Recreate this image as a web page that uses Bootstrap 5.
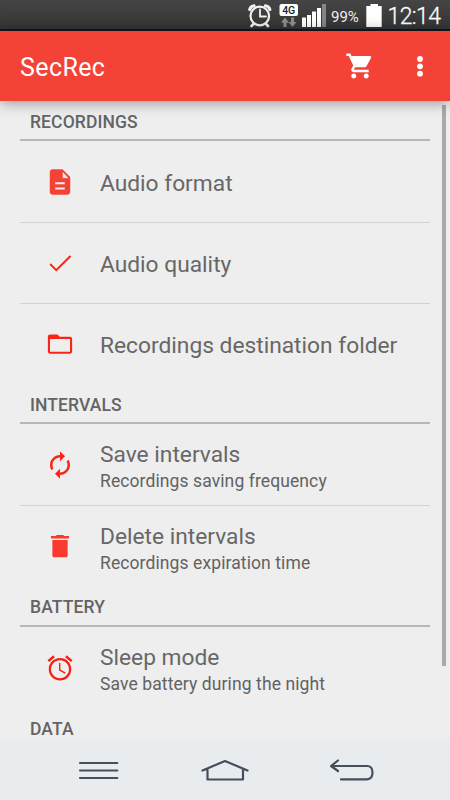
<!DOCTYPE html>
<html lang="en">
<head>
<meta charset="utf-8">
<meta name="viewport" content="width=device-width, initial-scale=1">
<title>SecRec</title>
<link href="https://cdn.jsdelivr.net/npm/bootstrap@5.3.0/dist/css/bootstrap.min.css" rel="stylesheet">
<style>
body{font-family:Roboto,"Liberation Sans",sans-serif;background:#eee;color:#676767;height:800px;line-height:1}
svg{display:block;flex:none}
.status-bar{height:31px;background:linear-gradient(#454545,#353535 94%,#101820 95%);color:#f0f0f0}
.net-label{font-size:15px}
.clock{font-size:23px;font-weight:300}
.app-bar{height:70px;background:#f44336;box-shadow:0 1px 14px rgba(0,0,0,.42);z-index:2}
.app-title{font-size:25px;font-weight:400;letter-spacing:.4px;margin-left:20px;padding-top:4px}
.settings{height:639px}
.settings-list{width:410px}
.section-title{height:40px;border-bottom:2px solid #b7b7b7;font-size:17.5px;font-weight:500;letter-spacing:.1px;padding:4px 0 0 10px;color:#646464}
.section-tall{height:41px}
.setting{height:81px}
.setting+.setting{border-top:1px solid #d2d2d2}
.setting-icon{width:80px;padding-left:25px}
.setting-name{font-size:22.75px;line-height:27px;padding-top:3px}
.setting-note{font-size:17.5px;line-height:21px;margin-top:3px;letter-spacing:.1px;color:#626262}
.setting-pair{padding-top:1px}
.scroll-thumb{right:4px;top:4px;width:4px;height:561px;background:#aaa}
.nav-keys{height:60px;background:#e8ecef;z-index:3}
</style>
<script src="https://cdn.jsdelivr.net/npm/bootstrap@5.3.0/dist/js/bootstrap.bundle.min.js"></script>
</head>
<body class="d-flex flex-column overflow-hidden">
<header class="status-bar d-flex flex-shrink-0 align-items-center justify-content-end">
  <svg width="202" height="31" viewBox="248 0 202 31" role="img" aria-label="Status">
    <g fill="none" stroke="#f2f2f2" stroke-linecap="round">
      <circle cx="259.800" cy="16" r="9.300" stroke-width="2.200"/>
      <path d="M260 9.500V16.500H266" stroke-width="1.800"/>
      <path d="M249.800 9.500Q250.300 6.500 254 5.800M265.500 5.800Q269.200 6.500 269.800 9.500" stroke-width="3.200"/>
      <path d="M253.500 24l-2 2M266 24l2 2" stroke-width="2.600"/>
    </g>
    <rect x="279.500" y="4" width="18.500" height="12" rx="2" fill="#fff"/>
    <text x="288.700" y="14" text-anchor="middle" font-size="10.500" font-weight="500" fill="#222">4G</text>
    <path d="M285 17.500l4 5h-2.500v4.500h-3v-4.500H281zM291 17.500h3v4.500h2.500l-4 5-4-5h2.500z" fill="#8e8e8e"/>
    <path d="M302 17.500h4V27h-4zM307 15h4v12h-4zM312 11.500h4V27h-4zM317 8h4v19h-4z" fill="#fff"/>
    <path d="M322 4h4v23h-4z" fill="#858585"/>
    <path d="M370.500 4h7.500v2h3.700v21h-15.400V6h4.200z" fill="#fff"/>
    <text class="net-label" x="331" y="22" fill="#eee">99%</text>
    <text class="clock" x="387.500" y="24" fill="#fff" stroke="#fff" stroke-width=".3" textLength="53.500">12:14</text>
  </svg>
</header>
<nav class="app-bar navbar flex-shrink-0 flex-nowrap text-white p-0 position-relative">
  <h1 class="app-title mb-0 me-auto">SecRec</h1>
  <svg width="30" height="30" viewBox="0 0 24 24" fill="#fff"><path d="M7 18c-1.100 0-1.990.9-1.990 2S5.900 22 7 22s2-.9 2-2-.9-2-2-2zM1 2v2h2l3.600 7.590-1.350 2.450c-.16.280-.25.610-.25.960 0 1.100.9 2 2 2h12v-2H7.420c-.14 0-.25-.11-.25-.25l.03-.12.900-1.630h7.450c.75 0 1.410-.41 1.750-1.030l3.580-6.490A1 1 0 0 0 20 4H5.210l-.94-2H1zm16 16c-1.100 0-1.990.9-1.990 2s.89 2 1.990 2 2-.9 2-2-.9-2-2-2z"/></svg>
  <svg width="75" height="30" viewBox="0 0 75 30" fill="#fff"><circle cx="45" cy="8" r="2.900"/><circle cx="45" cy="15.300" r="2.900"/><circle cx="45" cy="22.700" r="2.900"/></svg>
</nav>
<main class="settings position-relative overflow-hidden flex-shrink-0">
  <div class="settings-list mx-auto">
    <h2 class="section-title d-flex align-items-center mb-0">RECORDINGS</h2>
    <div class="setting d-flex align-items-center">
      <div class="setting-icon"><svg width="30" height="30" viewBox="0 0 24 24" fill="#f44336" stroke="#fb2a1c" stroke-width=".3"><path d="M14 2H6c-1.100 0-1.990.9-1.990 2L4 20c0 1.100.89 2 1.990 2H18c1.100 0 2-.9 2-2V8l-6-6zm2 16.200H8v-2h8v2zm0-4.200H8v-2h8v2zm-2-5V3.500L19 9z"/></svg></div>
      <div class="setting-name">Audio format</div>
    </div>
    <div class="setting d-flex align-items-center">
      <div class="setting-icon"><svg width="30" height="30" viewBox="0 0 24 24" fill="#fb2418"><path d="M9 16.500L4.700 12.200l-1.100 1.200L9 18.800 21 6.900l-1.200-1.200z"/></svg></div>
      <div class="setting-name">Audio quality</div>
    </div>
    <div class="setting d-flex align-items-center">
      <div class="setting-icon"><svg width="30" height="30" viewBox="0 0 24 24" fill="#fb2418"><path d="M20.200 6.200h-8.400L10 4.400H4.200C3 4.400 2.300 5.100 2.300 6v12c0 .9.700 1.700 1.700 1.700h16.100c.9 0 1.600-.8 1.600-1.700V7.900c0-.9-.7-1.700-1.500-1.700zM20 18.100H4V8h16z"/></svg></div>
      <div class="setting-name">Recordings destination folder</div>
    </div>
    <h2 class="section-title d-flex align-items-center mb-0">INTERVALS</h2>
    <div class="setting d-flex align-items-center">
      <div class="setting-icon"><svg width="30" height="30" viewBox="0 0 24 24" fill="#fb2418"><path d="M12 6v3l4-4-4-4v3c-4.420 0-8 3.580-8 8 0 1.570.46 3.030 1.240 4.260L6.700 14.800c-.45-.83-.7-1.790-.7-2.800 0-3.310 2.690-6 6-6zm6.760 1.740L17.300 9.200c.44.840.7 1.790.7 2.800 0 3.310-2.690 6-6 6v-3l-4 4 4 4v-3c4.420 0 8-3.580 8-8 0-1.570-.46-3.030-1.240-4.260z"/></svg></div>
      <div class="setting-pair"><div class="setting-name">Save intervals</div><div class="setting-note">Recordings saving frequency</div></div>
    </div>
    <div class="setting d-flex align-items-center">
      <div class="setting-icon"><svg width="30" height="30" viewBox="0 0 24 24" fill="#f93a2d"><path d="M5.900 7.200h12.200v12.500c0 .7-.5 1.200-1.200 1.200H7.100c-.7 0-1.200-.5-1.200-1.200zM19.200 4h-3.700l-1-.9h-5l-1 .9H4.800v1.900h14.400z"/></svg></div>
      <div class="setting-pair"><div class="setting-name">Delete intervals</div><div class="setting-note">Recordings expiration time</div></div>
    </div>
    <h2 class="section-title section-tall d-flex align-items-center mb-0">BATTERY</h2>
    <div class="setting d-flex align-items-center">
      <div class="setting-icon"><svg width="30" height="30" viewBox="0 0 24 24" fill="#fb1d12"><path d="M22 5.720l-4.600-3.860-1.290 1.530 4.600 3.860L22 5.720zM7.880 3.390L6.600 1.860 2 5.710l1.290 1.530 4.590-3.850zM12.300 8H11.200v6l4.750 2.650.55-1.030-4.200-2.370V8zM12 4c-4.970 0-9 4.030-9 9s4.020 9 9 9a9 9 0 0 0 0-18zm0 16.200c-3.980 0-7.200-3.220-7.200-7.200s3.220-7.200 7.200-7.200 7.200 3.220 7.200 7.200-3.220 7.200-7.200 7.200z"/></svg></div>
      <div class="setting-pair"><div class="setting-name">Sleep mode</div><div class="setting-note">Save battery during the night</div></div>
    </div>
    <h2 class="section-title section-tall d-flex align-items-center mb-0">DATA</h2>
  </div>
  <div class="scroll-thumb position-absolute"></div>
</main>
<footer class="nav-keys flex-shrink-0">
  <svg width="450" height="60" viewBox="0 740 450 60" fill="none" stroke="#454e5b" stroke-width="2.200" stroke-linecap="round" stroke-linejoin="round">
    <path d="M80 763h37.300M80 770.500h37.300M80 778h37.300"/>
    <path d="M202.500 770.500L225 761l22.500 9.500M207.500 769.500v10h35.500v-10"/>
    <path d="M338 760.500l-7 5.500 7 5M332 766h35q5.500 0 5.500 6.500t-5.500 6.900h-26"/>
  </svg>
</footer>
</body>
</html>
